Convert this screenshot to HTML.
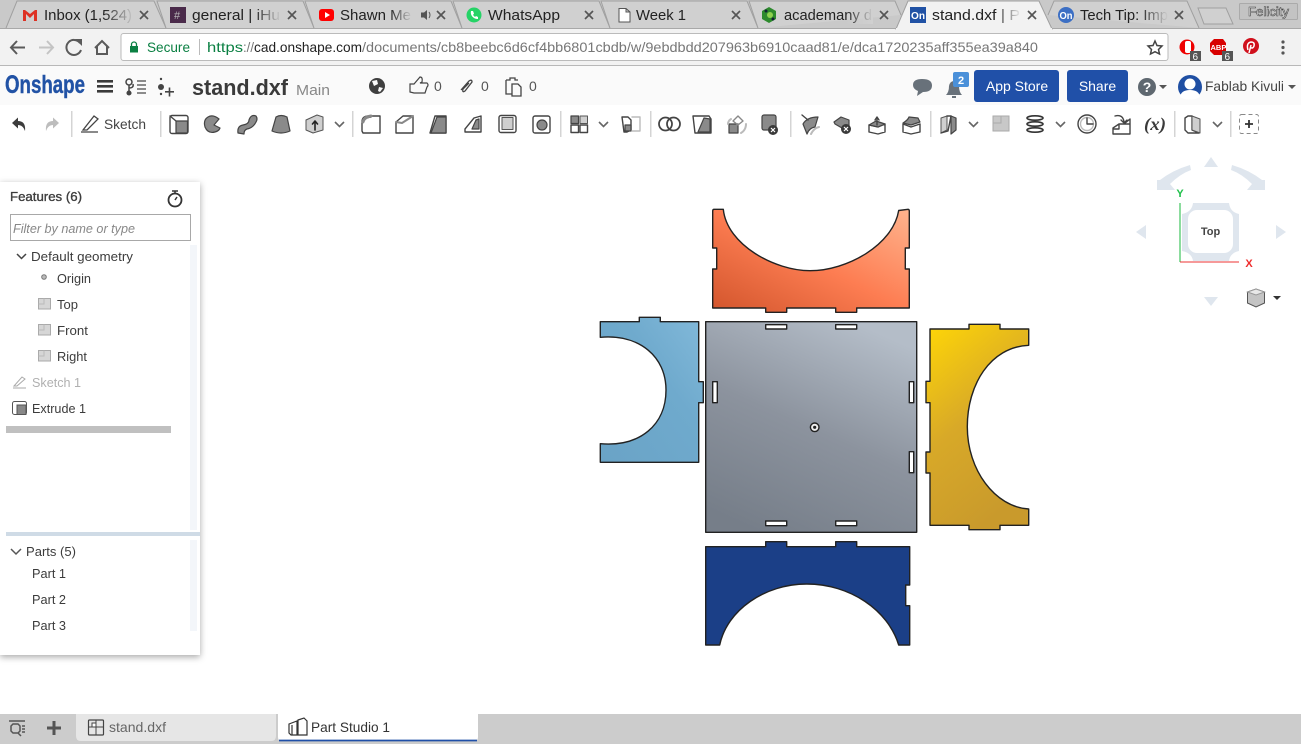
<!DOCTYPE html>
<html><head><meta charset="utf-8"><style>
html,body{margin:0;padding:0;background:#fff;width:1301px;height:744px;overflow:hidden}
svg{display:block;position:absolute;left:0;top:0}
text{font-family:"Liberation Sans",sans-serif}
.tb{font-size:15px;fill:#222}
.x{stroke:#555;stroke-width:1.7;fill:none}
.i{fill:none;stroke:#444;stroke-width:1.4;stroke-linejoin:round;stroke-linecap:round}
.g{fill:#8a8a8a;stroke:#444;stroke-width:1.2;stroke-linejoin:round}
.l{fill:#cfcfcf;stroke:#555;stroke-width:1}
.p{stroke:#222;stroke-width:1.4;stroke-linejoin:round}
.ft{font-size:13px;fill:#3c3c3c}
</style></head><body>
<svg width="1301" height="744" viewBox="0 0 1301 744">
<defs>
<linearGradient id="o" x1="0" y1="1" x2="1" y2="0"><stop offset="0" stop-color="#d2552c"/><stop offset=".5" stop-color="#fd7d52"/><stop offset="1" stop-color="#ffb48e"/></linearGradient>
<linearGradient id="b" x1="0" y1="1" x2="1" y2="0"><stop offset="0" stop-color="#6aa3c6"/><stop offset=".6" stop-color="#6faacd"/><stop offset="1" stop-color="#82b9da"/></linearGradient>
<linearGradient id="gr" x1=".25" y1="1" x2=".7" y2="0"><stop offset="0" stop-color="#767e89"/><stop offset=".5" stop-color="#8c939e"/><stop offset="1" stop-color="#b4bdc8"/></linearGradient>
<linearGradient id="y" x1=".1" y1="0" x2=".5" y2="1"><stop offset="0" stop-color="#fdd408"/><stop offset=".5" stop-color="#d8a928"/><stop offset="1" stop-color="#c99a2c"/></linearGradient>
<linearGradient id="fd1" x1="0" x2="1"><stop offset="0" stop-color="#d0d0d0" stop-opacity="0"/><stop offset="1" stop-color="#d0d0d0"/></linearGradient>
<linearGradient id="fd2" x1="0" x2="1"><stop offset="0" stop-color="#f2f2f2" stop-opacity="0"/><stop offset="1" stop-color="#f2f2f2"/></linearGradient>
<filter id="sh" x="-10%" y="-5%" width="120%" height="110%"><feDropShadow dx="0" dy="2" stdDeviation="3.5" flood-color="#000" flood-opacity=".35"/></filter>
</defs>

<!-- tab strip -->
<rect width="1301" height="28" fill="#c9c9c9"/>
<rect y="28" width="1301" height="37" fill="#f2f2f2"/>
<rect y="65" width="1301" height="1" fill="#b8b8b8"/>
<rect y="66" width="1301" height="39" fill="#fafafa"/>
<rect y="105" width="1301" height="609" fill="#fff"/>
<rect y="28" width="900" height="1" fill="#a8a8a8"/><rect x="1050" y="28" width="251" height="1" fill="#a8a8a8"/>
<g fill="#d0d0d0" stroke="#a0a0a0" stroke-width="1">
<path d="M6 28 L17 1 H154 L166 28"/>
<path d="M166 28 L157 1 H303 L314 28"/>
<path d="M314 28 L305 1 H451 L462 28"/>
<path d="M462 28 L453 1 H599 L610 28"/>
<path d="M610 28 L601 1 H747 L758 28"/>
<path d="M758 28 L749 1 H895 L901 15"/>
<path d="M1048 15 L1054 1 H1187 L1199 28"/>
<path d="M1198 8 H1226 L1233 24 H1204 Z"/>
</g>
<path d="M896 29 L908 1 H1039 L1052 29 Z" fill="#f2f2f2" stroke="#a0a0a0"/>
<rect x="896" y="28" width="156" height="2" fill="#f2f2f2"/>

<!-- favicons -->
<path d="M23 10 V21 H26 V14 L30 18 L34 14 V21 H37 V10 H35 L30 14 L25 10 Z" fill="#dd3124"/>
<rect x="170" y="7" width="16" height="16" fill="#4a2a4a"/><text x="174" y="19" font-size="11" fill="#bbb">#</text>
<rect x="319" y="9" width="15" height="12" rx="3" fill="#f00"/><path d="M325 12 L330 15 L325 18 Z" fill="#fff"/>
<circle cx="474" cy="15" r="7.5" fill="#25d366"/><path d="M471 11 C470 15 473 19 478 19 L478 17 L476 16 L475 17 L473 15 L474 13.500 L473 11 Z" fill="#fff"/>
<path d="M619 8.500 H626 L630 12 V22 H619 Z M626 8.500 V12 H630" fill="#fff" stroke="#555"/>
<path d="M769 7 L776 11 V19 L769 23 L762 19 V11 Z" fill="#2d8a2d"/><circle cx="770" cy="15" r="3" fill="#8ed14f"/><circle cx="766" cy="11" r="1.500" fill="#123"/><circle cx="773" cy="19" r="1.500" fill="#123"/>
<rect x="910" y="7" width="16" height="16" fill="#2152a5"/><text x="911" y="19" font-size="10" font-weight="700" fill="#fff" textLength="14" lengthAdjust="spacingAndGlyphs">On</text>
<circle cx="1066" cy="15" r="8" fill="#3c6fc4"/><text x="1059.500" y="19" font-size="10" font-weight="700" fill="#fff" textLength="13" lengthAdjust="spacingAndGlyphs">On</text>

<!-- tab text -->
<text x="44" y="20" class="tb" textLength="88" lengthAdjust="spacingAndGlyphs">Inbox (1,524)</text><rect x="104" y="6" width="30" height="18" fill="url(#fd1)"/>
<text x="192" y="20" class="tb" textLength="88" lengthAdjust="spacingAndGlyphs">general | iHu</text><rect x="254" y="6" width="27" height="18" fill="url(#fd1)"/>
<text x="340" y="20" class="tb" textLength="71" lengthAdjust="spacingAndGlyphs">Shawn Me</text><rect x="390" y="6" width="22" height="18" fill="url(#fd1)"/>
<text x="488" y="20" class="tb" textLength="72" lengthAdjust="spacingAndGlyphs">WhatsApp</text>
<text x="636" y="20" class="tb" textLength="50" lengthAdjust="spacingAndGlyphs">Week 1</text>
<text x="784" y="20" class="tb" textLength="88" lengthAdjust="spacingAndGlyphs">academany d</text><rect x="846" y="6" width="27" height="18" fill="url(#fd1)"/>
<text x="932" y="20" class="tb" textLength="88" lengthAdjust="spacingAndGlyphs">stand.dxf | P</text><rect x="996" y="6" width="25" height="18" fill="url(#fd2)"/>
<text x="1080" y="20" class="tb" textLength="88" lengthAdjust="spacingAndGlyphs">Tech Tip: Imp</text><rect x="1140" y="6" width="28" height="18" fill="url(#fd1)"/>

<!-- tab close -->
<g class="x">
<path d="M140 11 L148 19 M148 11 L140 19"/><path d="M288 11 L296 19 M296 11 L288 19"/><path d="M437 11 L445 19 M445 11 L437 19"/><path d="M585 11 L593 19 M593 11 L585 19"/><path d="M732 11 L740 19 M740 11 L732 19"/><path d="M880 11 L888 19 M888 11 L880 19"/><path d="M1028 11 L1036 19 M1036 11 L1028 19"/><path d="M1175 11 L1183 19 M1183 11 L1175 19"/>
</g>
<path d="M421 12.500 H424 L427 10 V20 L424 17.500 H421 Z" fill="#555"/><path d="M429 12 Q431 15 429 18" stroke="#555" fill="none"/>
<rect x="1239.500" y="3.500" width="58" height="16" rx="1" fill="#c3c3c3" stroke="#aaa"/>
<text x="1248" y="16" font-size="13" fill="#fff" stroke="#444" stroke-width=".6" textLength="41" lengthAdjust="spacingAndGlyphs">Felicity</text>

<!-- nav -->
<g fill="none" stroke="#5a5a5a" stroke-width="2">
<path d="M25 47.500 H11 M17 41 L11 47.500 L17 54"/>
<path d="M39 47.500 H53 M47 41 L53 47.500 L47 54" stroke="#c4c4c4"/>
<path d="M80 43 A7.500 7.500 0 1 0 81 50"/>
<path d="M95 48 L102 41 L109 48 M97 46 V54 H107 V46"/>
</g>
<path d="M75 39 L82 39 L82 46 Z" fill="#5a5a5a"/>
<rect x="121" y="33.500" width="1047" height="27" rx="2.500" fill="#fff" stroke="#bbb"/>
<rect x="130" y="46" width="8" height="6.500" fill="#0b8043"/><path d="M131.500 46 V44.500 A2.500 2.500 0 0 1 136.500 44.500 V46" fill="none" stroke="#0b8043" stroke-width="1.300"/>
<text x="147" y="52" font-size="14" fill="#0b8043" textLength="43" lengthAdjust="spacingAndGlyphs">Secure</text>
<rect x="199" y="39" width="1" height="16" fill="#bbb"/>
<text x="207" y="52" font-size="14" fill="#0b8043" textLength="36" lengthAdjust="spacingAndGlyphs">https</text>
<text x="243" y="52" font-size="14" fill="#777" textLength="11" lengthAdjust="spacingAndGlyphs">://</text>
<text x="254" y="52" font-size="14" fill="#222" textLength="108" lengthAdjust="spacingAndGlyphs">cad.onshape.com</text>
<text x="362" y="52" font-size="14" fill="#777" textLength="676" lengthAdjust="spacingAndGlyphs">/documents/cb8beebc6d6cf4bb6801cbdb/w/9ebdbdd207963b6910caad81/e/dca1720235aff355ea39a840</text>
<path d="M1155 41 L1157 45.500 L1162 46 L1158.500 49.500 L1159.500 54 L1155 51.700 L1150.500 54 L1151.500 49.500 L1148 46 L1153 45.500 Z" fill="none" stroke="#444" stroke-width="1.500"/>
<circle cx="1187" cy="47" r="7.500" fill="#e00"/><rect x="1185" y="41" width="6" height="12" rx="2" fill="#fff"/>
<rect x="1190" y="51" width="11" height="10" fill="#555"/><text x="1192.500" y="60" font-size="10" fill="#fff">6</text>
<path d="M1214 39 H1223 L1226 43 V51 L1223 55 H1214 L1210 51 V43 Z" fill="#d80000"/><text x="1210.500" y="50" font-size="7.500" font-weight="700" fill="#fff">ABP</text>
<rect x="1222" y="51" width="11" height="10" fill="#555"/><text x="1224.500" y="60" font-size="10" fill="#fff">6</text>
<circle cx="1251" cy="46" r="8" fill="#d0101c"/><path d="M1248 50 Q1246 43 1251 42 Q1255 42 1254 46 Q1253 49 1250.500 47.500 M1251 45 L1249 53" stroke="#fff" stroke-width="1.500" fill="none"/>
<g fill="#555"><circle cx="1283" cy="42" r="1.600"/><circle cx="1283" cy="47.500" r="1.600"/><circle cx="1283" cy="53" r="1.600"/></g>

<!-- header -->
<text x="5" y="93" font-size="25" font-weight="700" fill="#2152a5" stroke="#2152a5" stroke-width=".4" textLength="80" lengthAdjust="spacingAndGlyphs">Onshape</text>
<g fill="#3a3a3a"><rect x="97" y="80" width="16" height="2.600"/><rect x="97" y="85" width="16" height="2.600"/><rect x="97" y="90" width="16" height="2.600"/></g>
<g fill="none" stroke="#444" stroke-width="1.500"><circle cx="129" cy="82" r="3"/><circle cx="129" cy="93" r="1.800" fill="#444"/><path d="M129 85 V91 M129 88 Q134 88 133 84"/><path d="M137 81 H146 M137 85 H146 M137 89 H146 M137 93 H146" stroke="#666"/></g>
<g fill="#444"><circle cx="161" cy="79" r="1.200"/><circle cx="161" cy="87" r="3"/><circle cx="161" cy="94" r="1.200"/><rect x="165" y="91" width="9" height="1.600"/><rect x="168.700" y="87.500" width="1.600" height="9"/></g>
<text x="192" y="95" font-size="22" font-weight="700" fill="#3a3a3a" textLength="96" lengthAdjust="spacingAndGlyphs">stand.dxf</text>
<text x="296" y="95" font-size="15" fill="#888" textLength="34" lengthAdjust="spacingAndGlyphs">Main</text>
<circle cx="377" cy="86" r="8" fill="#3f3f3f"/><path d="M372 81 L377 80 L378 84 L374 86 Z M379 87 L383 88 L380 92 L378 91 Z" fill="#fafafa"/>
<path d="M410 84 H414 L420 77 Q423 77 422 82 L420 83 H427 Q429 85 427 87 L425 93 H414 L410 92 Z" fill="none" stroke="#444" stroke-width="1.200"/>
<text x="434" y="91" font-size="14" fill="#555">0</text>
<path d="M461 90 L469 81 Q472 79 472 82 L465 91 Q462 93 463 89 L469 83" fill="none" stroke="#444" stroke-width="1.300"/>
<text x="481" y="91" font-size="14" fill="#555">0</text>
<path d="M506 80 H510 V78 H515 V80 H518 M506 80 V94 H512 M512 84 H518 L521 87 V96 H512 Z" fill="none" stroke="#444" stroke-width="1.300"/>
<text x="529" y="91" font-size="14" fill="#555">0</text>
<path d="M913 85 Q913 79 922 79 Q932 79 932 85.500 Q932 92 923 92 L917 96 L918 91 Q913 89 913 85 Z" fill="#68717a"/>
<path d="M946 95 Q949 92 949 86 Q950 81 954 81 Q958 81 959 86 Q959 92 962 95 Z M952 96 H956 V98 H952 Z" fill="#68717a"/>
<rect x="953" y="72" width="16" height="15" rx="2" fill="#4a90d9"/><text x="958" y="84" font-size="11" font-weight="700" fill="#fff">2</text>
<rect x="974" y="70" width="85" height="32" rx="3" fill="#2050a8"/><text x="1017" y="91" font-size="14" fill="#fff" text-anchor="middle">App Store</text>
<rect x="1067" y="70" width="61" height="32" rx="3" fill="#2050a8"/><text x="1097.500" y="91" font-size="14" fill="#fff" text-anchor="middle">Share</text>
<circle cx="1147" cy="87" r="9" fill="#5f6870"/><text x="1147" y="92" font-size="14" font-weight="700" fill="#fff" text-anchor="middle">?</text>
<path d="M1159 85 H1167 L1163 89 Z" fill="#555"/>
<circle cx="1190" cy="87" r="12" fill="#1f4fa3"/><circle cx="1190" cy="84" r="5.500" fill="#fff"/><path d="M1180 97 Q1181 90 1190 90 Q1199 90 1200 97 Q1195 100 1190 99.500 Q1185 100 1180 97 Z" fill="#fff"/>
<text x="1205" y="91" font-size="14" fill="#444" textLength="79" lengthAdjust="spacingAndGlyphs">Fablab Kivuli</text>
<path d="M1288 85 H1296 L1292 89 Z" fill="#555"/>

<!-- toolbar -->
<g fill="#d4d4d4">
<rect x="71" y="111" width="1.500" height="26"/><rect x="160" y="111" width="1.500" height="26"/><rect x="352" y="111" width="1.500" height="26"/><rect x="560" y="111" width="1.500" height="26"/><rect x="650" y="111" width="1.500" height="26"/><rect x="790" y="111" width="1.500" height="26"/><rect x="930" y="111" width="1.500" height="26"/><rect x="1174" y="111" width="1.500" height="26"/><rect x="1230" y="111" width="1.500" height="26"/>
</g>
<path d="M12 123 L18 117.500 V121 Q26 121 25 131 Q23 125 18 125 V128.500 Z" fill="#3c3c3c"/>
<path d="M59 123 L53 117.500 V121 Q45 121 46 131 Q48 125 53 125 V128.500 Z" fill="#bdbdbd"/>
<path d="M83 130 L94 116 L98 119 L87 130 Z M81 132 H98" fill="none" stroke="#444" stroke-width="1.300"/>
<text x="104" y="129" font-size="13.500" fill="#444" textLength="42" lengthAdjust="spacingAndGlyphs">Sketch</text>

<g class="i">
<!-- extrude --><g transform="translate(179 124)"><rect x="-9" y="-8.500" width="18" height="18" rx="2"/><rect class="g" x="-3" y="-3" width="11.500" height="12"/><path d="M-9 -8 L-3 -3"/></g>
<!-- revolve --><path class="g" d="M219 119 Q213 114 208 117 Q203 120 205 127 Q208 134 215 132 Q219 131 220 128 L214 125 Z"/>
<!-- sweep --><path class="g" d="M238 133 Q237 126 243 125 Q249 124 249 120 Q251 114 256 116 Q258 119 256 122 Q253 128 247 129 Q244 130 244 134 Z"/>
<!-- loft --><path class="g" d="M276 117 Q281 114 287 117 L290 131 Q281 135 272 131 Z"/>
<!-- thicken --><g transform="translate(315 124)"><path class="l" d="M-9 -4 L2 -9 L8 -7 V6 L-2 9 L-9 6 Z"/><path d="M0 6 V-2 M-2.500 0 L0 -3 L2.500 0" stroke="#222" stroke-width="1.600"/></g>
<!-- fillet --><path d="M362 131 V122 Q362 116 369 116 H380 V133 H363 Z M362 123 Q363 118 371 117" /><path d="M363 122 Q364 117 371 116" stroke="#888" stroke-width="3"/>
<!-- chamfer --><path d="M396 133 V122 L403 116 H413 V133 Z"/><path d="M396 122 L402 123 L413 116" stroke="#888" stroke-width="2"/>
<!-- draft --><path d="M430 133 L435 116 H446 V133 Z"/><path class="g" d="M431 133 L437 117 H446 V133 Z"/>
<!-- rib --><path d="M465 129 L474 118 L481 116 V132 H465 Z"/><path class="g" d="M472 129 L476 120 L479 119 V129 Z"/>
<!-- shell --><rect x="499" y="115.500" width="17" height="17" rx="2"/><rect class="l" x="502" y="117.500" width="11" height="12"/>
<!-- hole --><rect x="533" y="116" width="17" height="17" rx="2"/><circle class="g" cx="542" cy="125" r="5"/>
<!-- pattern --><g stroke="#444"><rect x="571" y="116" width="7.500" height="7.500" class="g"/><rect x="580" y="116" width="7.500" height="7.500" class="l"/><rect x="571" y="125" width="7.500" height="7.500"/><rect x="580" y="125" width="7.500" height="7.500"/></g>
<!-- mirror --><path d="M622 117 H628 L631 120 V130 L627 132 H624 Z"/><path class="g" d="M625 125 H631 V131 H625 Z" fill="#aaa"/><path d="M632 117 H640 V131 H632" stroke="#bbb"/>
<!-- boolean --><circle cx="665.500" cy="124" r="6.500" stroke-width="1.800"/><circle cx="673.500" cy="124" r="6.500" stroke-width="1.800"/>
<!-- split --><path d="M693 116 H709 L711 119 V133 H695 Z"/><path class="g" d="M704 118 L710 119 V132 H698 Z"/>
<!-- transform --><rect class="g" x="729" y="124" width="9" height="9"/><path d="M738 116 L743 121 L738 125 L733 121 Z" stroke="#888"/><path d="M731 119 Q728 121 728 124 M746 124 Q746 130 741 133" stroke="#bbb" stroke-width="2"/>
<!-- delete --><rect class="g" x="762" y="115" width="14" height="15" rx="2"/></g>
<circle cx="773" cy="130" r="5" fill="#3a3a3a"/><path d="M771 128 L775 132 M775 128 L771 132" stroke="#fff" stroke-width="1.200"/>
<g class="i">
<!-- modify fillet --><path class="g" d="M803 124 Q807 117 818 117 L815 127 Q809 128 807 134 Z"/><path d="M802 115 L808 120" /><path d="M811 134 Q814 128 819 127" stroke="#bbb" stroke-width="2"/>
<!-- delete face --><path class="g" d="M834 122 L841 117 L849 120 L849 128 L842 128 L835 124 Z"/></g>
<circle cx="846" cy="129" r="5" fill="#3a3a3a"/><path d="M844 127 L848 131 M848 127 L844 131" stroke="#fff" stroke-width="1.200"/>
<g class="i">
<!-- move face --><path d="M869 125 L878 127 L885 124 V132 L878 134 L869 132 Z"/><path class="g" d="M869 125 L876 121 L885 124 L878 127 Z"/><path d="M877 125 V118 M875 120 L877 117 L879 120"/>
<!-- replace face --><path d="M903 124 L911 127 L920 124 V132 L911 134 L903 132 Z"/><path class="g" d="M903 123 Q908 120 909 117 L918 118 L920 122 L911 125 Z"/>
<!-- plane --><path class="l" d="M941 118 L947 116 V130 L941 133 Z"/><path class="g" d="M951 116 L956 118 V130 L951 134 Z"/><path d="M947 116 L951 116 L948 131 L941 133"/>
<!-- plane2 --></g><rect x="993" y="116" width="16" height="15" fill="#c8c8c8" stroke="#aaa"/><path d="M1001 116 V123 H993" stroke="#aaa" fill="none"/>
<g class="i">
<!-- helix --><g stroke="#333" stroke-width="1.600"><ellipse cx="1035" cy="118" rx="8" ry="2.200"/><ellipse cx="1035" cy="124" rx="8" ry="2.200"/><ellipse cx="1035" cy="130" rx="8" ry="2.200"/></g>
<!-- clock --><circle cx="1087" cy="124" r="9"/><circle cx="1087" cy="124" r="6.500" stroke="#bbb"/><path d="M1087 118 V124 H1093"/>
<!-- wrap --><path d="M1113 128 L1119 124 H1130 V134 H1113 Z M1119 124 V129 H1113 M1124 124 L1130 119 V124"/><path d="M1115 116 Q1123 114 1124 122 M1121 120 L1124 123 L1127 120"/>
<!-- parts --><path d="M1185 118 L1188 116 H1192 V130 L1199 133 H1188 L1185 130 Z"/><path class="l" d="M1192 116 L1200 119 V133 L1192 130 Z"/>
</g>
<text x="1144" y="130" font-size="18" font-weight="700" font-style="italic" fill="#3a3a3a" textLength="22" lengthAdjust="spacingAndGlyphs" style="font-family:'Liberation Serif',serif">(x)</text>
<g fill="none" stroke="#666" stroke-width="1.600"><path d="M335 122 L339.500 126.500 L344 122"/><path d="M599 122 L603.500 126.500 L608 122"/><path d="M969 122 L973.500 126.500 L978 122"/><path d="M1056 122 L1060.500 126.500 L1065 122"/><path d="M1213 122 L1217.500 126.500 L1222 122"/></g>
<rect x="1239.500" y="114.500" width="19" height="19" rx="2" fill="none" stroke="#888" stroke-dasharray="4 3"/><path d="M1245 124 H1253 M1249 120 V128" stroke="#333" stroke-width="1.800"/>

<!-- parts -->
<path fill="url(#o)" class="p" d="M712.700 211 Q712.700 209.300 714 209.300 H723.300 C727 245 775 270.700 810 270.700 C847 270.700 893 245 898.700 210.500 L908 209.300 Q909.300 209.300 909.300 211 V248 H905.300 V269 H909.300 V308 H856.700 V312.300 H835.700 V308 H786.700 V312.300 H765.700 V308 H712.700 V269 H716.700 V248 H712.700 Z"/>
<path fill="url(#b)" class="p" d="M600.300 321.700 H639.300 V317.300 H660.300 V321.700 H698.700 V381.700 H703.300 V402.700 H698.700 V462.300 H600.300 V443.700 C640 447 666 425 666 390 C666 357 640 334 600.300 337.300 Z"/>
<path fill="url(#gr)" class="p" fill-rule="evenodd" d="M705.700 321.700 H916.700 V532.300 H705.700 Z M765.700 324.700 V329 H786.700 V324.700 Z M835.700 324.700 V329 H856.700 V324.700 Z M765.700 521 V525.700 H786.700 V521 Z M835.700 521 V525.700 H856.700 V521 Z M712.700 381.700 V402.700 H717.300 V381.700 Z M909.300 381.700 V402.700 H913.700 V381.700 Z M909.300 451.700 V472.700 H913.700 V451.700 Z"/>
<circle cx="814.700" cy="427.300" r="4.300" fill="#eee" stroke="#222" stroke-width="1.400"/><circle cx="814.700" cy="427.300" r="1.600" fill="#222"/>
<path fill="url(#y)" class="p" d="M930 329 H969 V324.300 H1000 V329 H1028.700 V345.300 C990 347 967.300 385 967.300 426.700 C967.300 470 995 507 1028.700 509 V525.300 H1000 V529.700 H969 V525.300 H930 V473 H926 V452 H930 V402.700 H926 V381.300 H930 Z"/>
<path fill="#1b3f87" class="p" d="M705.700 546.700 H765.700 V541.700 H786.700 V546.700 H835.700 V541.700 H856.700 V546.700 H909.700 V585 H905.700 V605.700 H909.700 V645 H898.700 C888 610 850 584 806.700 584 C765 584 727 610 719.700 645 H705.700 Z"/>

<!-- view cube -->
<g fill="#dfe6ee">
<path d="M1193 203 H1229 Q1230 212 1239 214 V251 Q1230 253 1229 261 H1193 Q1192 253 1182 251 V214 Q1192 212 1193 203 Z"/>
<path d="M1211 157 L1218 167 H1204 Z"/><path d="M1136 232 L1146 225 V239 Z"/><path d="M1286 232 L1276 225 V239 Z"/><path d="M1211 306 L1204 297 H1218 Z"/>
<path d="M1190 165 Q1173 170 1160 180 L1157 180 V190 H1175 L1170 184 Q1180 174 1191 170 Z"/>
<path d="M1232 165 Q1249 170 1262 180 L1265 180 V190 H1247 L1252 184 Q1242 174 1231 170 Z"/>
</g>
<rect x="1188" y="210" width="45" height="43" rx="9" fill="#fff"/>
<path d="M1180 203 V262" fill="none" stroke="#19b83d" stroke-width="1"/><path d="M1180 262 H1239" stroke="#ee3333" stroke-width="1"/>
<text x="1180" y="197" font-size="11" font-weight="700" fill="#1fc04a" text-anchor="middle">Y</text>
<text x="1249" y="267" font-size="11" font-weight="700" fill="#ee2b2b" text-anchor="middle">X</text>
<text x="1210.500" y="235" font-size="11" font-weight="700" fill="#444" text-anchor="middle">Top</text>
<path d="M1247.500 292 L1256 289 L1264.500 292 V303 L1256 307 L1247.500 303 Z" fill="#c4c4c4" stroke="#555"/><path d="M1247.500 292 L1256 295 L1264.500 292 L1256 289 Z" fill="#e8e8e8" stroke="#999"/>
<path d="M1273 296 H1281 L1277 300 Z" fill="#333"/>

<!-- features panel -->
<rect x="0" y="182" width="200" height="473" fill="#fff" filter="url(#sh)"/>
<text x="10" y="201" font-size="13" fill="#3c3c3c" stroke="#3c3c3c" stroke-width=".35" textLength="72" lengthAdjust="spacingAndGlyphs">Features (6)</text>
<circle cx="175" cy="200" r="6.500" fill="none" stroke="#333" stroke-width="1.800"/><path d="M172 191 H178 M175 191 V194 M175 200 L177 197" stroke="#333" stroke-width="1.500" fill="none"/>
<rect x="10.500" y="214.500" width="180" height="26" fill="#fff" stroke="#a8a8a8"/>
<text x="13" y="233" font-size="13" font-style="italic" fill="#888" textLength="122" lengthAdjust="spacingAndGlyphs">Filter by name or type</text>
<rect x="190" y="245" width="7" height="285" fill="#f3f6fa"/>
<rect x="190" y="540" width="7" height="91" fill="#f3f6fa"/>
<path d="M17 254 L21.500 258.500 L26 254" fill="none" stroke="#444" stroke-width="1.500"/>
<text x="31" y="261" class="ft" textLength="102" lengthAdjust="spacingAndGlyphs">Default geometry</text>
<circle cx="44" cy="277" r="2.300" fill="#bbb" stroke="#777"/>
<text x="57" y="283" class="ft" textLength="34" lengthAdjust="spacingAndGlyphs">Origin</text>
<g fill="#d6d6d6" stroke="#aaa"><rect x="38.500" y="298.500" width="12" height="10.500"/><rect x="38.500" y="324.500" width="12" height="10.500"/><rect x="38.500" y="350.500" width="12" height="10.500"/></g>
<path d="M44 298.500 V304 H38.500 M44 324.500 V330 H38.500 M44 350.500 V356 H38.500" fill="none" stroke="#bbb"/>
<text x="57" y="309" class="ft" textLength="21" lengthAdjust="spacingAndGlyphs">Top</text>
<text x="57" y="335" class="ft" textLength="31" lengthAdjust="spacingAndGlyphs">Front</text>
<text x="57" y="361" class="ft" textLength="30" lengthAdjust="spacingAndGlyphs">Right</text>
<path d="M14 386 L22 377 L25 379 L17 386 Z M13 388 H26" fill="none" stroke="#aaa"/>
<text x="32" y="387" class="ft" style="fill:#b0b0b0" textLength="49" lengthAdjust="spacingAndGlyphs">Sketch 1</text>
<rect x="12.500" y="401.500" width="14" height="13" rx="2" fill="#fff" stroke="#555"/><rect x="17" y="405" width="9" height="9.500" fill="#888" stroke="#555"/>
<text x="32" y="413" class="ft" textLength="54" lengthAdjust="spacingAndGlyphs">Extrude 1</text>
<rect x="6" y="426" width="165" height="7" fill="#c0c0c0"/>
<rect x="6" y="532" width="194" height="4" fill="#cfdbe6"/>
<path d="M11 549 L16 554 L21 549" fill="none" stroke="#555" stroke-width="1.500"/>
<text x="26" y="556" class="ft" textLength="50" lengthAdjust="spacingAndGlyphs">Parts (5)</text>
<text x="32" y="578" class="ft" textLength="34" lengthAdjust="spacingAndGlyphs">Part 1</text>
<text x="32" y="604" class="ft" textLength="34" lengthAdjust="spacingAndGlyphs">Part 2</text>
<text x="32" y="630" class="ft" textLength="34" lengthAdjust="spacingAndGlyphs">Part 3</text>

<!-- bottom bar -->
<rect y="714" width="1301" height="30" fill="#cccccc"/>
<path d="M9 721 H25 M13 733 L11 731 V726 L13 724 H18 L20 726 V731 L18 733 Z M18 733 L21 736 M22 726 H25 M22 729 H25 M22 732 H25" fill="none" stroke="#555" stroke-width="1.500"/>
<path d="M47 728 H61 M54 721 V735" stroke="#555" stroke-width="3"/>
<path d="M76 714 H276 V736 Q276 741 271 741 H81 Q76 741 76 736 Z" fill="#e6e6e6"/>
<path d="M278 714 H478 V737 Q478 741 474 741 H282 Q278 741 278 737 Z" fill="#fff"/>
<path d="M279 740.500 H477" stroke="#2050a8" stroke-width="1.800"/>
<rect x="88.500" y="720" width="15" height="15" rx="1" fill="none" stroke="#444" stroke-width="1.200"/><path d="M96 735 V720 M88.500 727 H103.500" stroke="#444" fill="none"/><rect x="92" y="723" width="4" height="4" fill="#fff" stroke="#444"/>
<text x="109" y="732" font-size="14" fill="#666" textLength="57" lengthAdjust="spacingAndGlyphs">stand.dxf</text>
<path d="M289 724 L297 721 V735 H291 L289 733 Z M298 720 L304 718 L307 721 V735 H298 Z M292 725 V735" fill="none" stroke="#333" stroke-width="1.200"/>
<text x="311" y="732" font-size="14" fill="#333" textLength="79" lengthAdjust="spacingAndGlyphs">Part Studio 1</text>
</svg>
</body></html>
